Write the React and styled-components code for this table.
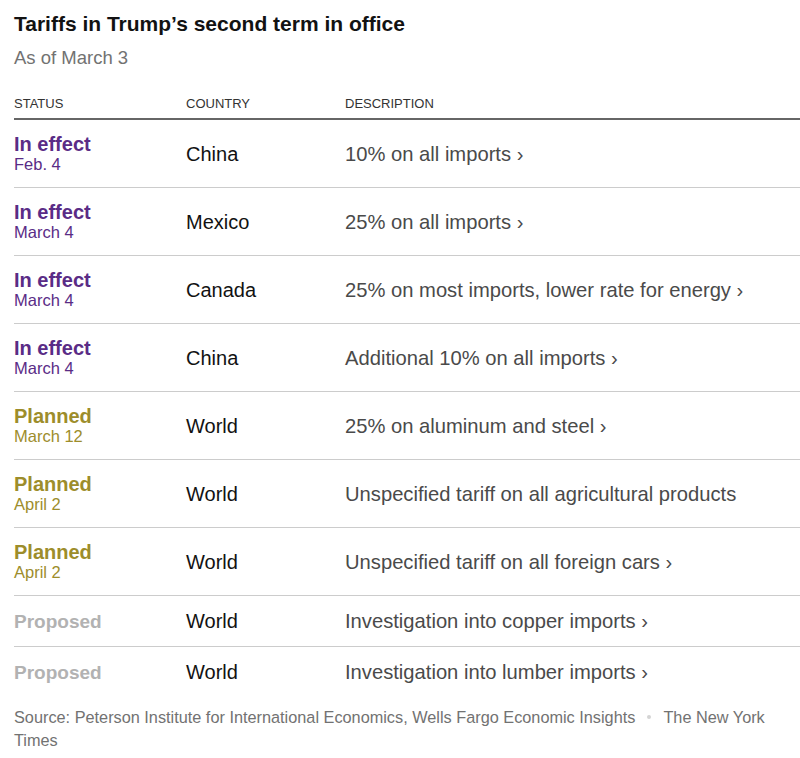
import React from "react";
import styled, { createGlobalStyle } from "styled-components";

const GlobalStyle = createGlobalStyle`
  body {
    margin: 0;
    background: #ffffff;
    font-family: "Liberation Sans", Arial, sans-serif;
  }
`;

const rows = [
  { status: "effect", label: "In effect", date: "Feb. 4", country: "China", desc: "10% on all imports", link: true },
  { status: "effect", label: "In effect", date: "March 4", country: "Mexico", desc: "25% on all imports", link: true },
  { status: "effect", label: "In effect", date: "March 4", country: "Canada", desc: "25% on most imports, lower rate for energy", link: true },
  { status: "effect", label: "In effect", date: "March 4", country: "China", desc: "Additional 10% on all imports", link: true },
  { status: "planned", label: "Planned", date: "March 12", country: "World", desc: "25% on aluminum and steel", link: true },
  { status: "planned", label: "Planned", date: "April 2", country: "World", desc: "Unspecified tariff on all agricultural products", link: false },
  { status: "planned", label: "Planned", date: "April 2", country: "World", desc: "Unspecified tariff on all foreign cars", link: true },
  { status: "proposed", label: "Proposed", country: "World", desc: "Investigation into copper imports", link: true },
  { status: "proposed", label: "Proposed", country: "World", desc: "Investigation into lumber imports", link: true },
];

const statusColors = {
  effect: "#5a2c86",
  planned: "#9d8d2b",
  proposed: "#b2b2b2",
};

export default () => (
  <Page>
    <GlobalStyle />
    <Title>Tariffs in Trump’s second term in office</Title>
    <Subtitle>As of March 3</Subtitle>
    <Table>
      <HeadRow>
        <HeadCell>Status</HeadCell>
        <HeadCell>Country</HeadCell>
        <HeadCell>Description</HeadCell>
      </HeadRow>
      {rows.map((r, i) => (
        <Row key={i} short={!r.date} last={i === rows.length - 1}>
          <StatusCell>
            <StatusLabel color={statusColors[r.status]} small={!r.date}>
              {r.label}
            </StatusLabel>
            {r.date && <StatusDate color={statusColors[r.status]}>{r.date}</StatusDate>}
          </StatusCell>
          <Country>{r.country}</Country>
          <Desc>
            {r.desc}
            {r.link && " ›"}
          </Desc>
        </Row>
      ))}
    </Table>
    <Source>
      Source: Peterson Institute for International Economics, Wells Fargo Economic Insights
      <Dot />
      The New York Times
    </Source>
  </Page>
);

const Page = styled.div`
  padding: 12px 0 0 14px;
  width: 786px;
`;

const Title = styled.h1`
  margin: 0;
  font-size: 21px;
  line-height: 24px;
  font-weight: 700;
  color: #121212;
`;

const Subtitle = styled.p`
  margin: 11px 0 0;
  font-size: 18.5px;
  line-height: 22px;
  color: #727272;
`;

const Table = styled.div`
  margin-top: 27px;
`;

const HeadRow = styled.div`
  display: grid;
  grid-template-columns: 172px 159px 1fr;
  padding-bottom: 6px;
  border-bottom: 2px solid #666666;
`;

const HeadCell = styled.div`
  font-size: 13px;
  line-height: 16px;
  text-transform: uppercase;
  color: #333333;
`;

const Row = styled.div`
  display: grid;
  grid-template-columns: 172px 159px 1fr;
  align-items: center;
  height: ${(p) => (p.short ? "50px" : "67px")};
  border-bottom: ${(p) => (p.last ? "none" : "1px solid #cccccc")};
`;

const StatusCell = styled.div`
  display: flex;
  flex-direction: column;
`;

const StatusLabel = styled.span`
  font-size: ${(p) => (p.small ? "19px" : "20px")};
  line-height: 21px;
  font-weight: 700;
  color: ${(p) => p.color};
`;

const StatusDate = styled.span`
  font-size: 16.5px;
  line-height: 19px;
  color: ${(p) => p.color};
`;

const Country = styled.div`
  font-size: 20px;
  line-height: 24px;
  color: #121212;
`;

const Desc = styled.div`
  font-size: 20.2px;
  line-height: 24px;
  color: #4a4a4a;
`;

const Source = styled.p`
  margin: 9px 0 0;
  font-size: 16.3px;
  line-height: 23px;
  color: #727272;
  width: 770px;
`;

const Dot = styled.span`
  display: inline-block;
  width: 4px;
  height: 4px;
  border-radius: 50%;
  background: #d4d4d4;
  margin: 0 12px;
  vertical-align: 4px;
`;
